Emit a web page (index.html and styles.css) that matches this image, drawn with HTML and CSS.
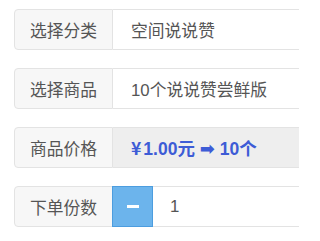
FILE: index.html
```html
<!DOCTYPE html>
<html>
<head>
<meta charset="utf-8">
<link rel="stylesheet" href="styles.css">
</head>
<body>
<div class="form">
  <div class="group">
    <span class="addon">选择分类</span>
    <div class="field">空间说说赞</div>
  </div>
  <div class="group">
    <span class="addon">选择商品</span>
    <div class="field">10个说说赞尝鲜版</div>
  </div>
  <div class="group">
    <span class="addon">商品价格</span>
    <div class="field readonly"><b class="price"><span class="yen">¥</span>1.00元 <span class="arrow">➡</span> 10个</b></div>
  </div>
  <div class="group">
    <span class="addon">下单份数</span>
    <button class="minus" type="button"><span class="bar"></span></button>
    <div class="field num">1</div>
  </div>
</div>
</body>
</html>
```

FILE: styles.css
```css
html, body {
  margin: 0;
  padding: 0;
  background: #fff;
  overflow: hidden;
}
.form {
  padding: 9px 0 0 14px;
  width: 285px;
  font-family: "Liberation Sans", "Noto Sans CJK SC", sans-serif;
  font-size: 16.8px;
  color: #555;
}
.group {
  display: flex;
  height: 41px;
  margin-bottom: 18px;
}
.addon {
  box-sizing: border-box;
  width: 99px;
  height: 41px;
  display: flex;
  align-items: center;
  justify-content: center;
  background: #f7f7f7;
  border: 1px solid #e3e3e3;
  border-radius: 4px 0 0 4px;
  color: #555;
  font-family: "Noto Sans CJK SC", sans-serif;
  font-size: 16.8px;
  flex: none;
}
.field {
  box-sizing: border-box;
  flex: 1;
  min-width: 0;
  height: 41px;
  display: flex;
  align-items: center;
  padding-left: 18px;
  border-top: 1px solid #e3e3e3;
  border-bottom: 1px solid #e3e3e3;
  background: #fff;
  color: #555;
  white-space: nowrap;
}
.field.readonly {
  background: #eeeeee;
}
.price {
  color: #3d5cd6;
  font-weight: bold;
  font-size: 17.5px;
  font-family: "Liberation Sans", "Noto Sans CJK SC", sans-serif;
}
.yen {
  font-family: "Noto Sans CJK SC", sans-serif;
  margin-right: 2px;
}
.arrow {
  font-family: "DejaVu Sans", sans-serif;
  font-size: 18px;
}
.minus {
  box-sizing: border-box;
  width: 41px;
  height: 41px;
  margin: 0 0 0 -1px;
  padding: 0;
  flex: none;
  background: #6cb4ec;
  border: 1px solid #4c9ddf;
  display: flex;
  align-items: center;
  justify-content: center;
}
.bar {
  display: block;
  width: 12px;
  height: 3px;
  background: #fff;
}
.field.num {
  padding-left: 17px;
}
```
